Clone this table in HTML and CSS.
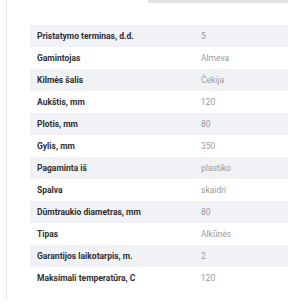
FILE: index.html
```html
<!DOCTYPE html>
<html lang="lt">
<head>
<meta charset="utf-8">
<link rel="stylesheet" href="styles.css">
</head>
<body>
<div class="panel">
  <div class="topbar"></div>
  <table class="specs">
    <tbody>
      <tr><th>Pristatymo terminas, d.d.</th><td>5</td></tr>
      <tr><th>Gamintojas</th><td>Almeva</td></tr>
      <tr><th>Kilmės šalis</th><td>Čekija</td></tr>
      <tr><th>Aukštis, mm</th><td>120</td></tr>
      <tr><th>Plotis, mm</th><td>80</td></tr>
      <tr><th>Gylis, mm</th><td>350</td></tr>
      <tr><th>Pagaminta iš</th><td>plastiko</td></tr>
      <tr><th>Spalva</th><td>skaidri</td></tr>
      <tr><th>Dūmtraukio diametras, mm</th><td>80</td></tr>
      <tr><th>Tipas</th><td>Alkūnės</td></tr>
      <tr><th>Garantijos laikotarpis, m.</th><td>2</td></tr>
      <tr><th>Maksimali temperatūra, C</th><td>120</td></tr>
    </tbody>
  </table>
</div>
</body>
</html>
```
FILE: styles.css
```css
html, body {
  margin: 0;
  padding: 0;
  background: #fff;
}
body {
  width: 288px;
  height: 304px;
  overflow: hidden;
  font-family: Roboto, "Liberation Sans", sans-serif;
}
.panel {
  margin-left: 6px;
  border-left: 1px solid #e7e8ec;
  height: 300px;
}
.topbar {
  margin-left: 141px;
  height: 3px;
  background: #e2e3e7;
}
.specs {
  margin-top: 22px;
  margin-left: 23px;
  width: calc(100% - 23px);
  border-collapse: collapse;
  font-size: 8.5px;
}
.specs tr {
  height: 22px;
}
.specs tr:nth-child(odd) {
  background: #f1f2f5;
}
.specs th {
  width: 157px;
  padding: 0 0 0 7px;
  text-align: left;
  font-weight: 700;
  color: #2f2f33;
  white-space: nowrap;
}
.specs td {
  padding: 0 0 0 7px;
  font-weight: 400;
  color: #9a9aa0;
}
```
